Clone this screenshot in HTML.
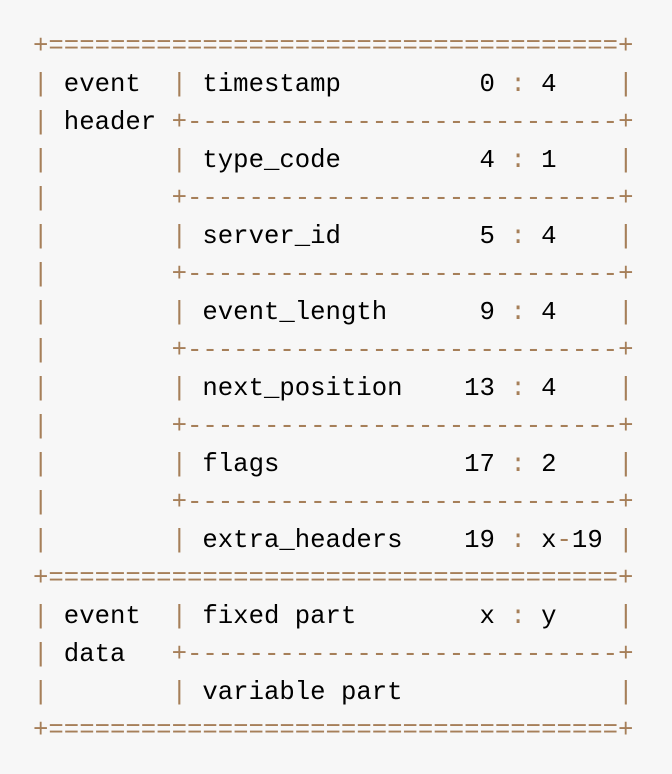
<!DOCTYPE html>
<html><head><style>
html,body{margin:0;padding:0;background:#f7f7f7;width:672px;height:774px;overflow:hidden}
pre{margin:0;position:absolute;left:33px;top:28px;font-family:"Liberation Mono",monospace;font-size:25.67px;line-height:38px;color:#000}
b{font-weight:normal;color:#a67f59}
</style></head><body>
<pre><b>+=====================================+</b>
<b>|</b> event  <b>|</b> timestamp         0 <b>:</b> 4    <b>|</b>
<b>|</b> header <b>+----------------------------+</b>
<b>|</b>        <b>|</b> type_code         4 <b>:</b> 1    <b>|</b>
<b>|</b>        <b>+----------------------------+</b>
<b>|</b>        <b>|</b> server_id         5 <b>:</b> 4    <b>|</b>
<b>|</b>        <b>+----------------------------+</b>
<b>|</b>        <b>|</b> event_length      9 <b>:</b> 4    <b>|</b>
<b>|</b>        <b>+----------------------------+</b>
<b>|</b>        <b>|</b> next_position    13 <b>:</b> 4    <b>|</b>
<b>|</b>        <b>+----------------------------+</b>
<b>|</b>        <b>|</b> flags            17 <b>:</b> 2    <b>|</b>
<b>|</b>        <b>+----------------------------+</b>
<b>|</b>        <b>|</b> extra_headers    19 <b>:</b> x<b>-</b>19 <b>|</b>
<b>+=====================================+</b>
<b>|</b> event  <b>|</b> fixed part        x <b>:</b> y    <b>|</b>
<b>|</b> data   <b>+----------------------------+</b>
<b>|</b>        <b>|</b> variable part              <b>|</b>
<b>+=====================================+</b></pre>
</body></html>
